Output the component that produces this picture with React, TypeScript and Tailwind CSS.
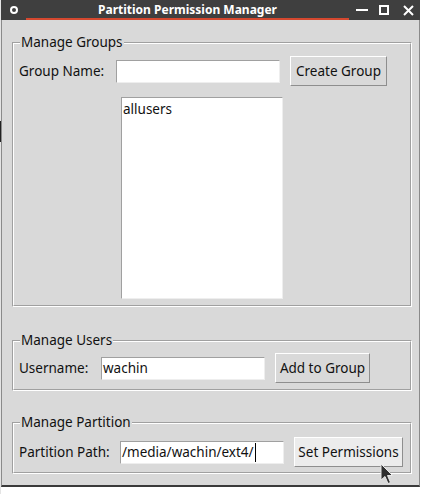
import type { ReactNode } from 'react';
import clsx from 'clsx';

const font = { fontFamily: '"Noto Sans", "Open Sans", sans-serif' };

function Frame(props: { title: string; className?: string; children: ReactNode }) {
  return (
    <div
      className={clsx(
        'relative border border-t-[#a0a0a0] border-l-[#a0a0a0] border-b-white border-r-white',
        props.className
      )}>
      <div className="h-full border border-t-white border-l-white border-b-[#a0a0a0] border-r-[#a0a0a0]">
        {props.children}
      </div>
      <span className="absolute left-[7px] top-[-10px] bg-[#d9d9d9] px-px leading-[19px]">{props.title}</span>
    </div>
  );
}

function Entry(props: { value?: string; caret?: boolean }) {
  return (
    <div className="flex h-[23px] w-[164px] items-center border border-t-[#a0a0a0] border-l-[#a0a0a0] border-b-[#eeeeee] border-r-[#eeeeee] bg-white pl-[1px] pt-px">
      <span className="leading-[19px]">{props.value}</span>
      {props.caret && <span className="ml-px h-[19px] w-px bg-black" />}
    </div>
  );
}

function Button(props: { label: string; width: string; active?: boolean }) {
  return (
    <div
      className={clsx(
        'flex h-[30px] items-center justify-center border border-t-white border-l-white border-b-[#8e8e8e] border-r-[#8e8e8e] pt-px',
        props.width,
        props.active ? 'bg-[#ececec]' : 'bg-[#d9d9d9]'
      )}>
      {props.label}
    </div>
  );
}

export default function App() {
  return (
    <div className="relative flex h-[494px] w-[421px] bg-white text-[13.5px] text-[#111]" style={font}>
      {/* bit of desktop peeking at the left edge */}
      <div className="flex w-[1px] flex-col bg-[#e4e4e4]">
        <div className="mt-[121px] h-[21px] bg-[#222]" />
      </div>

      <div className="flex h-[487px] w-[419px] flex-col">
        {/* title bar */}
        <div className="flex h-[20px] items-center bg-[#3f3f3f] text-white">
          <div className="flex w-[25px] justify-center">
            <svg width="10" height="10" viewBox="0 0 10 10">
              <circle cx="5" cy="5" r="3" fill="none" stroke="white" strokeWidth="2" />
            </svg>
          </div>
          <div className="flex h-[20px] w-[323px] items-center justify-center border-b-2 border-[#d4482f] pt-[1px] text-[12px] leading-[16px] font-bold">
            Partition Permission Manager
          </div>
          <div className="flex flex-1 items-center">
            <svg className="ml-[7px]" width="12" height="12" viewBox="0 0 12 12">
              <rect x="0" y="5" width="12" height="2" fill="white" />
            </svg>
            <svg className="ml-[11px]" width="10" height="10" viewBox="0 0 10 10">
              <rect x="1" y="1" width="8" height="8" fill="none" stroke="white" strokeWidth="2" />
            </svg>
            <svg className="ml-[14px]" width="11" height="11" viewBox="0 0 11 11">
              <path d="M1 1 L10 10 M10 1 L1 10" stroke="white" strokeWidth="2" />
            </svg>
          </div>
        </div>

        {/* window body */}
        <div className="flex flex-1 flex-col border-x border-b-2 border-x-[#8a8a8a] border-b-[#3a3a3a] bg-[#d9d9d9]">
          <Frame title="Manage Groups" className="ml-[10px] mt-[22px] h-[265px] w-[400px]">
            <div className="flex items-center pl-[5px] pt-[12px]">
              <span className="w-[97px] pt-px">Group Name:</span>
              <Entry />
              <div className="ml-[10px]">
                <Button label="Create Group" width="w-[97px]" />
              </div>
            </div>
            <div className="ml-[107px] mt-[11px] h-[202px] w-[162px] border border-t-[#a0a0a0] border-l-[#a0a0a0] border-b-[#eeeeee] border-r-[#eeeeee] bg-white pl-px pt-[2px] leading-[19px]">
              allusers
            </div>
          </Frame>

          <Frame title="Manage Users" className="ml-[10px] mt-[33px] h-[51px] w-[400px]">
            <div className="flex items-center pl-[5px] pt-[11px]">
              <span className="w-[82px] pt-px">Username:</span>
              <Entry value="wachin" />
              <div className="ml-[10px]">
                <Button label="Add to Group" width="w-[95px]" />
              </div>
            </div>
          </Frame>

          <Frame title="Manage Partition" className="ml-[10px] mt-[31px] h-[52px] w-[400px]">
            <div className="flex items-center pl-[5px] pt-[13px]">
              <span className="w-[101px] pt-px">Partition Path:</span>
              <Entry value="/media/wachin/ext4/" caret />
              <div className="ml-[10px]">
                <Button label="Set Permissions" width="w-[109px]" active />
              </div>
            </div>
          </Frame>
        </div>
      </div>

      {/* mouse pointer over the Set Permissions button */}
      <svg className="absolute left-[380px] top-[463px]" width="14" height="22" viewBox="0 0 14 22">
        <path d="M1 1 L1 17 L5 13.5 L8 20.5 L10.5 19.5 L7.5 12.5 L12.5 12.5 Z" fill="#2f2f2f" stroke="#e8e8e8" strokeWidth="1" strokeLinejoin="round" />
      </svg>
    </div>
  );
}
